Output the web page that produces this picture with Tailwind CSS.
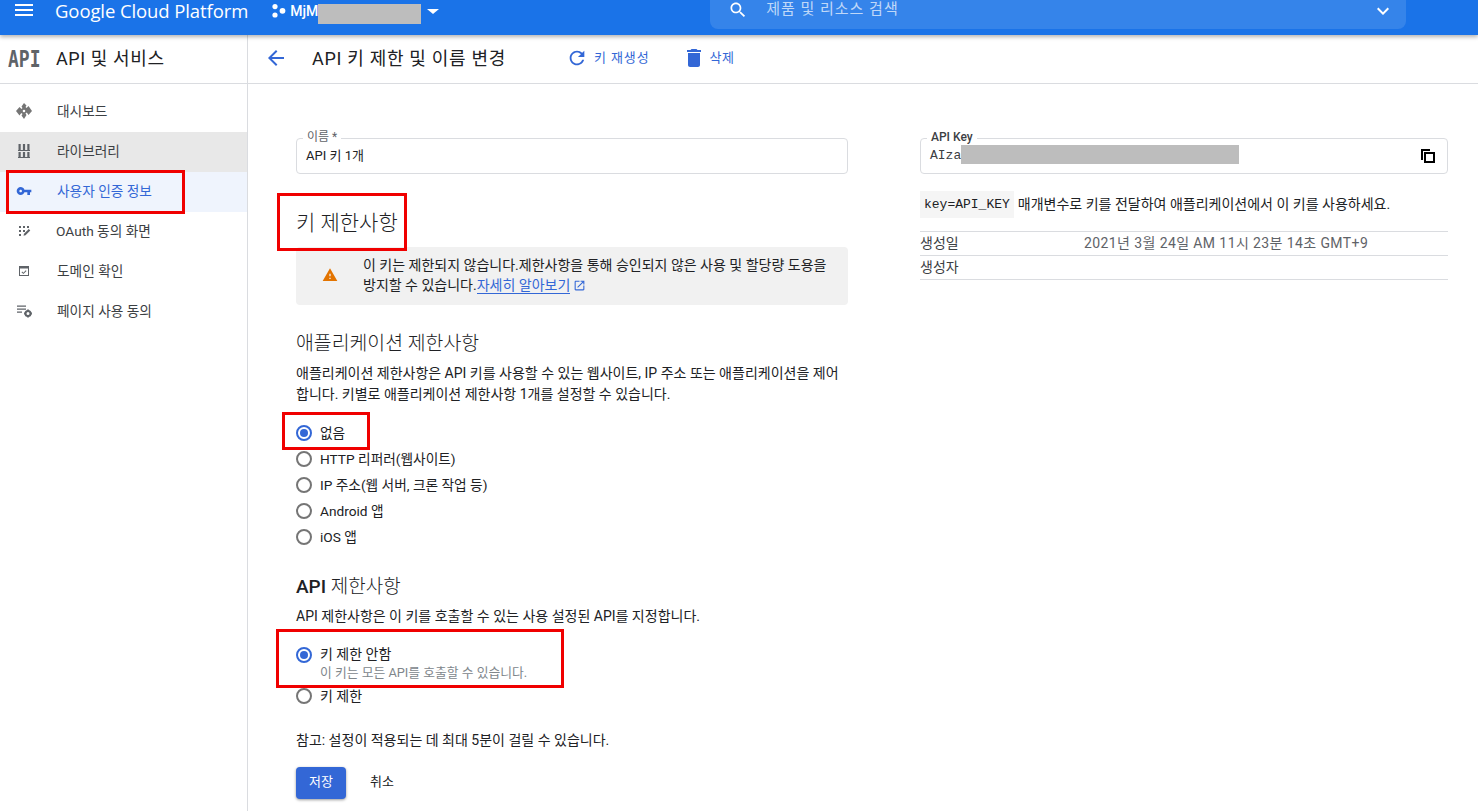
<!DOCTYPE html>
<html lang="ko">
<head>
    <meta charset="UTF-8">
    <meta name="viewport" content="width=device-width, initial-scale=1.0">
    <title>API 키 제한 및 이름 변경</title>
    <script src="https://cdn.jsdelivr.net/npm/@tailwindcss/browser@4"></script>
</head>
<body class="relative h-[811px] overflow-hidden bg-white text-[14px] text-[#202124] font-['Roboto','Noto_Sans_CJK_KR',sans-serif]">

    <!-- Top bar -->
    <header class="relative z-10 flex h-[35px] items-start bg-[#1a73e8] text-white shadow-[0_2px_4px_rgba(0,0,0,0.3)]">
        <svg class="ml-[12px] mt-[-2px] h-[24px] w-[24px] fill-white" viewBox="0 0 24 24"><path d="M3 18h18v-2H3v2zm0-5h18v-2H3v2zm0-7v2h18V6H3z"/></svg>
        <span class="ml-[19px] mt-[-2px] text-[18.500px] leading-[25px] tracking-[-0.1px] font-['Open_Sans','Roboto',sans-serif]">Google Cloud Platform</span>
        <svg class="ml-[23px] mt-[3px] h-[16px] w-[16px] fill-white" viewBox="0 0 16 16"><circle cx="4" cy="3.600" r="2.600"/><circle cx="4" cy="12" r="2.600"/><circle cx="11.500" cy="7.800" r="2.900"/></svg>
        <span class="ml-[3px] mt-[1px] flex items-start font-medium text-[14px] leading-[20px]">MjM<span class="mt-[3px] inline-block h-[20px] w-[103px] bg-[#bdbdbd]"></span></span>
        <svg class="mt-[-1px] h-[24px] w-[24px] fill-white" viewBox="0 0 24 24"><path d="M6 10l6 5 6-5z"/></svg>
        <div class="ml-[265px] flex h-[29px] w-[696px] items-start rounded-b-lg bg-white/12">
            <svg class="ml-[18px] h-[20px] w-[20px] fill-white" viewBox="0 0 24 24"><path d="M15.500 14h-.79l-.28-.27C15.410 12.590 16 11.110 16 9.500 16 5.910 13.090 3 9.500 3S3 5.910 3 9.500 5.910 16 9.500 16c1.610 0 3.090-.59 4.230-1.570l.27.28v.79l5 4.990L20.490 19l-4.990-5zm-6 0C7.010 14 5 11.990 5 9.500S7.010 5 9.500 5 14 7.010 14 9.500 11.990 14 9.500 14z"/></svg>
            <span class="ml-[18px] mt-[-1px] text-[15px] leading-[20px] tracking-[1px] text-white/70">제품 및 리소스 검색</span>
            <svg class="ml-auto mr-[11px] mt-[-1px] h-[24px] w-[24px] fill-white" viewBox="0 0 24 24"><path d="M16.590 8.590L12 13.170 7.410 8.590 6 10l6 6 6-6z"/></svg>
        </div>
    </header>

    <div class="flex h-[776px]">
        <!-- Sidebar -->
        <aside class="w-[248px] shrink-0 border-r border-[#dadce0]">
            <div class="flex h-[49px] items-center border-b border-[#dadce0] pb-[2px]">
                <span class="ml-[8px] inline-block w-[48px] origin-left scale-y-125 text-[18px] font-bold text-[#5f6368] font-['DejaVu_Sans_Mono',monospace]">API</span>
                <span class="text-[18px] tracking-[0.6px]">API 및 서비스</span>
            </div>
            <nav class="pt-[8px] text-[13.700px] text-[#3c4043]">
                <a class="flex h-[40px] items-center pb-[2px]">
                    <svg class="ml-[16px] mr-[25px] h-[16px] w-[16px] fill-[#757575]" viewBox="0 0 16 16"><path fill-rule="evenodd" d="M8 0l2.500 2.500-1 1.500 1 1 1-.9 1-1L16 8l-3.500 3.900-1-1.500-1-.9-1 1 1 1.500L8 16l-2.500-3.500 1-1.500-1-1-1 .9-1 1.500L0 8l3.500-3.900 1 1 1 .9 1-1-1-1.500zM8 6.700A1.300 1.300 0 1 0 8 9.300 1.300 1.300 0 1 0 8 6.700z"/></svg>
                    대시보드
                </a>
                <a class="flex h-[40px] items-center bg-[#e8e8e8] pb-[2px]">
                    <svg class="ml-[16px] mr-[25px] h-[16px] w-[16px] fill-[#5f6368]" viewBox="0 0 16 16"><path d="M2.500 1h2.200v6H2.500zM6.900 1h2.200v6H6.900zM11.300 1h2.200v6h-2.200zM2 7h12v1H2zM2.500 9h2.200v5H2.500zM6.900 9h2.200v5H6.900zM11.300 9h2.200v5h-2.200zM2 14h12v1H2z"/></svg>
                    라이브러리
                </a>
                <a class="flex h-[40px] items-center bg-[#eff4fd] pb-[2px] text-[#3367d6]">
                    <svg class="ml-[16px] mr-[25px] h-[16px] w-[16px] fill-[#3367d6]" viewBox="0 0 24 24"><path d="M12.650 10C11.830 7.670 9.610 6 7 6c-3.310 0-6 2.690-6 6s2.690 6 6 6c2.610 0 4.830-1.670 5.650-4H17v4h4v-4h2v-4H12.650zM7 14c-1.100 0-2-.9-2-2s.9-2 2-2 2 .9 2 2-.9 2-2 2z"/></svg>
                    사용자 인증 정보
                </a>
                <a class="flex h-[40px] items-center pb-[2px]">
                    <svg class="ml-[16px] mr-[24px] h-[16px] w-[16px] fill-[#5f6368]" viewBox="0 0 16 16"><path d="M3 3h2v2H3zM7 3h2v2H7zM11 3h2v2h-2zM3 7h2v2H3zM7 7h2v2H7zM3 11h2v2H3zM7.500 12.800l.5-2 4.800-4.800 1.500 1.500-4.800 4.800z"/></svg>
                    OAuth 동의 화면
                </a>
                <a class="flex h-[40px] items-center pb-[2px]">
                    <svg class="ml-[16px] mr-[25px] h-[16px] w-[16px] fill-[#5f6368]" viewBox="0 0 16 16"><path fill-rule="evenodd" d="M3 3h10v10H3zM4 5.500V12h8V5.500z"/><path d="M5.500 9.200l.7-.7 1.200 1.200 2.400-2.400.7.700-3.100 3.100z"/></svg>
                    도메인 확인
                </a>
                <a class="flex h-[40px] items-center pb-[2px]">
                    <svg class="ml-[16px] mr-[25px] h-[16px] w-[16px] fill-[#5f6368]" viewBox="0 0 16 16"><path d="M1 2.500h9v1.200H1zM1 5.500h9v1.200H1zM1 8.500h5v1.200H1z"/><circle cx="12" cy="10.500" r="2.500" fill="none" stroke="#5f6368" stroke-width="2"/><path d="M11.100 6.400h1.800v1.500h-1.800zM11.100 13.100h1.800v1.500h-1.800zM8.100 9.600h1.500v1.800H8.100zM14.400 9.600h1.500v1.800h-1.500z"/></svg>
                    페이지 사용 동의
                </a>
            </nav>
        </aside>

        <!-- Main -->
        <main class="flex-1">
            <div class="flex h-[49px] items-center border-b border-[#dadce0] pb-[2px]">
                <svg class="ml-[16px] h-[24px] w-[24px] fill-[#3367d6]" viewBox="0 0 24 24"><path d="M20 11H7.830l5.590-5.590L12 4l-8 8 8 8 1.410-1.410L7.830 13H20v-2z"/></svg>
                <h1 class="ml-[24px] text-[18px] tracking-[0.7px]">API 키 제한 및 이름 변경</h1>
                <button class="ml-[60px] flex items-center gap-[6px] text-[13px] tracking-[0.9px] text-[#3367d6]">
                    <svg class="h-[22px] w-[22px] fill-[#3367d6]" viewBox="0 0 24 24"><path d="M17.650 6.350C16.200 4.900 14.210 4 12 4c-4.420 0-7.990 3.580-7.990 8s3.570 8 7.990 8c3.730 0 6.840-2.550 7.730-6h-2.080c-.82 2.330-3.040 4-5.650 4-3.310 0-6-2.690-6-6s2.690-6 6-6c1.660 0 3.140.69 4.220 1.780L13 11h7V4l-2.350 2.350z"/></svg>
                    키 재생성
                </button>
                <button class="ml-[32px] flex items-center gap-[4px] text-[13px] tracking-[0.5px] text-[#3367d6]">
                    <svg class="h-[24px] w-[24px] fill-[#3367d6]" viewBox="0 0 24 24"><path d="M6 19c0 1.100.9 2 2 2h8c1.100 0 2-.9 2-2V7H6v12zM19 4h-3.500l-1-1h-5l-1 1H5v2h14V4z"/></svg>
                    삭제
                </button>
            </div>

            <div class="flex gap-[72px] pl-[48px]">
                <!-- Form column -->
                <section class="w-[552px]">
                    <div class="relative mt-[54px] flex h-[36px] items-center rounded border border-[#dadce0] px-[9px] text-[13px]">
                        API 키 1개
                        <label class="absolute left-[6px] top-[-9px] bg-white px-[4px] text-[12px] leading-[14px] text-[#5f6368]">이름 *</label>
                    </div>

                    <h2 class="mt-[35px] h-[28px] text-[21px] font-light leading-[28px]">키 제한사항</h2>

                    <div class="mt-[10px] flex h-[58px] items-center rounded bg-[#f1f1f1] pb-[3px] text-[14px] leading-[20px]">
                        <svg class="ml-[26px] mr-[25px] h-[16px] w-[16px] shrink-0 fill-[#e37400]" viewBox="0 0 24 24"><path d="M1 21h22L12 2 1 21zm12-3h-2v-2h2v2zm0-4h-2v-4h2v4z"/></svg>
                        <p>이 키는 제한되지 않습니다.제한사항을 통해 승인되지 않은 사용 및 할당량 도용을<br>방지할 수 있습니다.<a class="border-b border-[#3367d6] text-[#3367d6]">자세히 알아보기</a><svg class="ml-[3px] inline h-[13px] w-[13px] fill-[#3367d6] align-[-2px]" viewBox="0 0 24 24"><path d="M19 19H5V5h7V3H5c-1.110 0-2 .9-2 2v14c0 1.100.89 2 2 2h14c1.100 0 2-.9 2-2v-7h-2v7zM14 3v2h3.590l-9.830 9.830 1.410 1.410L19 6.410V10h2V3h-7z"/></svg></p>
                    </div>

                    <h3 class="mt-[26px] h-[26px] text-[19.400px] font-light leading-[26px]">애플리케이션 제한사항</h3>
                    <p class="mt-[6px] leading-[21px]">애플리케이션 제한사항은 API 키를 사용할 수 있는 웹사이트, IP 주소 또는 애플리케이션을 제어<br>합니다. 키별로 애플리케이션 제한사항 1개를 설정할 수 있습니다.</p>

                    <div class="mt-[15px] text-[13.700px]">
                        <label class="flex h-[26px] items-center gap-[8px]">
                            <span class="flex h-[16px] w-[16px] items-center justify-center rounded-full border-2 border-[#3367d6]"><span class="h-[8px] w-[8px] rounded-full bg-[#3367d6]"></span></span>
                            없음
                        </label>
                        <label class="flex h-[26px] items-center gap-[8px]"><span class="h-[16px] w-[16px] rounded-full border-2 border-[#757575]"></span>HTTP 리퍼러(웹사이트)</label>
                        <label class="flex h-[26px] items-center gap-[8px]"><span class="h-[16px] w-[16px] rounded-full border-2 border-[#757575]"></span>IP 주소(웹 서버, 크론 작업 등)</label>
                        <label class="flex h-[26px] items-center gap-[8px]"><span class="h-[16px] w-[16px] rounded-full border-2 border-[#757575]"></span>Android 앱</label>
                        <label class="flex h-[26px] items-center gap-[8px]"><span class="h-[16px] w-[16px] rounded-full border-2 border-[#757575]"></span>iOS 앱</label>
                    </div>

                    <h3 class="mt-[24px] h-[26px] text-[19px] font-light leading-[26px]"><span class="font-medium">API</span> 제한사항</h3>
                    <p class="mt-[6px] leading-[21px]">API 제한사항은 이 키를 호출할 수 있는 사용 설정된 API를 지정합니다.</p>

                    <div class="mt-[18px] flex items-start gap-[8px]">
                        <span class="mt-[2px] flex h-[16px] w-[16px] items-center justify-center rounded-full border-2 border-[#3367d6]"><span class="h-[8px] w-[8px] rounded-full bg-[#3367d6]"></span></span>
                        <div>
                            <div class="leading-[19px]">키 제한 안함</div>
                            <div class="text-[12.800px] leading-[17px] text-[#80868b]">이 키는 모든 API를 호출할 수 있습니다.</div>
                        </div>
                    </div>
                    <label class="mt-[2px] flex h-[26px] items-center gap-[8px]"><span class="h-[16px] w-[16px] rounded-full border-2 border-[#757575]"></span>키 제한</label>

                    <p class="mt-[21px] leading-[20px]">참고: 설정이 적용되는 데 최대 5분이 걸릴 수 있습니다.</p>

                    <div class="mt-[17px] flex items-center text-[13px]">
                        <button class="h-[32px] w-[50px] rounded bg-[#3367d6] pb-[2px] text-white shadow-[0_1px_3px_rgba(0,0,0,0.4)]">저장</button>
                        <button class="ml-[24px] pb-[2px] text-[#202124]">취소</button>
                    </div>
                </section>

                <!-- Key column -->
                <section class="w-[528px]">
                    <div class="relative mt-[54px] flex h-[36px] items-center rounded border border-[#dadce0] pl-[9px] pr-[11px] text-[12.500px]">
                        <span class="font-['Liberation_Mono',monospace] text-[13px] text-[#3c4043]">AIza</span><span class="mb-[3px] h-[19px] w-[278px] bg-[#bdbdbd]"></span>
                        <svg class="mb-[1px] ml-auto h-[16px] w-[16px] fill-black" viewBox="0 0 16 16"><path fill-rule="evenodd" d="M1 1h9v2H3v9H1zM4 4h11v11H4zM6 6v7h7V6z"/></svg>
                        <label class="absolute left-[6px] top-[-9px] bg-white px-[4px] text-[12px] font-medium leading-[14px] text-[#3c4043]">API Key</label>
                    </div>

                    <p class="mt-[17px] flex h-[27px] items-center">
                        <code class="mr-[4px] flex h-[27px] items-center bg-[#f5f5f5] px-[4px] font-['Liberation_Mono',monospace] text-[13px]">key=API_KEY</code>
                        매개변수로 키를 전달하여 애플리케이션에서 이 키를 사용하세요.
                    </p>

                    <table class="mt-[13px] w-full border-y border-[#dadce0]">
                        <tbody>
                            <tr class="h-[24px] border-b border-[#dadce0]">
                                <td class="w-[164px] text-[#3c4043]">생성일</td>
                                <td class="tracking-[0.4px] text-[#5f6368]">2021년 3월 24일 AM 11시 23분 14초 GMT+9</td>
                            </tr>
                            <tr class="h-[24px]">
                                <td class="text-[#3c4043]">생성자</td>
                                <td></td>
                            </tr>
                        </tbody>
                    </table>
                </section>
            </div>
        </main>
    </div>

    <!-- Red annotation boxes drawn over the screenshot -->
    <div class="absolute left-[6px] top-[170px] z-20 h-[44px] w-[179px] border-[3px] border-[#f00000]"></div>
    <div class="absolute left-[277px] top-[193px] z-20 h-[58px] w-[130px] border-[3px] border-[#f00000]"></div>
    <div class="absolute left-[282px] top-[412px] z-20 h-[38px] w-[88px] border-[3px] border-[#f00000]"></div>
    <div class="absolute left-[276px] top-[629px] z-20 h-[59px] w-[288px] border-[3px] border-[#f00000]"></div>
</body>
</html>
